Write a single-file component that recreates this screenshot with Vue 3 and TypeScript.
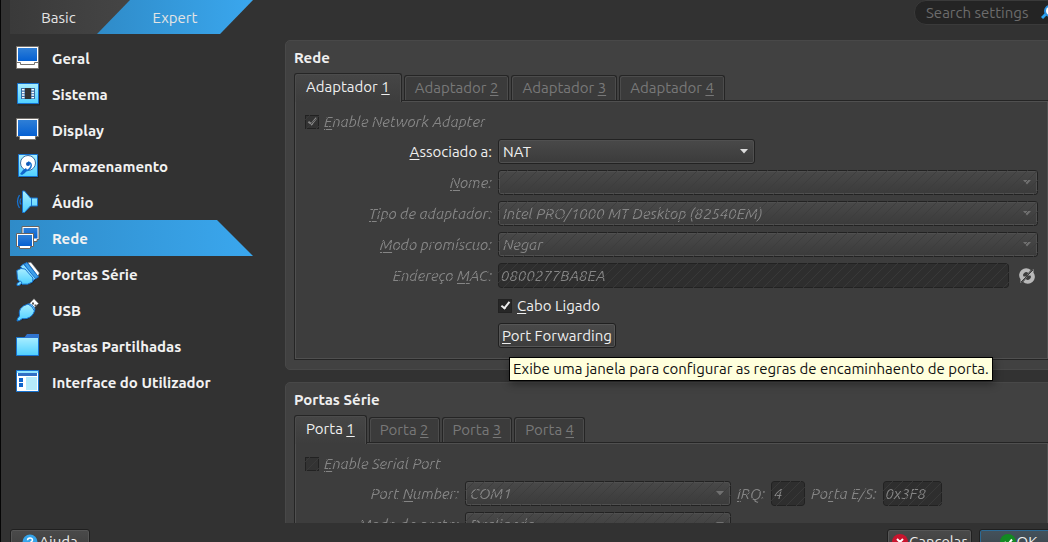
<script setup lang="ts">
import { ref } from 'vue'

type Mnemonic = [string, string, string]

interface Category {
  icon: string
  label: string
}

const categories: Category[] = [
  { icon: 'general', label: 'Geral' },
  { icon: 'system', label: 'Sistema' },
  { icon: 'display', label: 'Display' },
  { icon: 'storage', label: 'Armazenamento' },
  { icon: 'audio', label: 'Áudio' },
  { icon: 'network', label: 'Rede' },
  { icon: 'serial', label: 'Portas Série' },
  { icon: 'usb', label: 'USB' },
  { icon: 'folder', label: 'Pastas Partilhadas' },
  { icon: 'interface', label: 'Interface do Utilizador' },
]

const selected = ref('network')
const adapter = ref(1)
const port = ref(1)
const cableConnected = ref(true)

interface LockedCombo {
  id: string
  label: Mnemonic
  value: string
}

const lockedCombos: LockedCombo[] = [
  { id: 'name', label: ['', 'N', 'ome:'], value: '' },
  { id: 'type', label: ['', 'T', 'ipo de adaptador:'], value: 'Intel PRO/1000 MT Desktop (82540EM)' },
  { id: 'promisc', label: ['', 'M', 'odo promíscuo:'], value: 'Negar' },
]
</script>

<template>
  <div class="viewport">
    <div class="window">
      <header class="top">
        <div class="modes">
          <button type="button" class="mode basic">Basic</button>
          <button type="button" class="mode expert">Expert</button>
        </div>
        <div class="search">
          <input type="text" placeholder="Search settings" aria-label="Search settings" />
          <svg width="16" height="16" viewBox="0 0 16 16" aria-hidden="true">
            <path d="M1 13l5-5" stroke="#2aa5f5" stroke-width="3" />
            <circle cx="9" cy="6" r="5" fill="#fff" stroke="#2a8fe0" stroke-width="2" />
          </svg>
        </div>
      </header>

      <main class="body">
        <nav class="sidebar">
          <a
            v-for="c in categories"
            :key="c.icon"
            :href="'#' + c.icon"
            :class="['item', { on: selected === c.icon }]"
            @click="selected = c.icon"
          >
            <svg width="24" height="24" viewBox="0 0 24 24" aria-hidden="true">
              <defs>
                <linearGradient :id="'b-' + c.icon" x1="0" y1="0" x2="0" y2="1">
                  <stop offset="0" stop-color="#2f7fd6" />
                  <stop offset="1" stop-color="#0560d2" />
                </linearGradient>
                <linearGradient :id="'c-' + c.icon" x1="0" y1="0" x2="0" y2="1">
                  <stop offset="0" stop-color="#a9eeff" />
                  <stop offset="1" stop-color="#4fd0ff" />
                </linearGradient>
              </defs>
              <g v-if="c.icon === 'general'">
                <path d="M.5.5h22v22H.5z" fill="#fff" stroke="#77736e" />
                <path d="M2 2h19v13H2z" :fill="`url(#b-${c.icon})`" />
                <path d="M1 16.500h3.500v2h14v-2h3.500" fill="none" stroke="#77736e" />
              </g>
              <g v-else-if="c.icon === 'system'">
                <path d="M2 23h21.500V2" fill="none" stroke="#222" />
                <path d="M1.500 1.500h21v20h-21z" :fill="`url(#c-${c.icon})`" stroke="#1672d0" />
                <path d="M5 6h14v11H5z" fill="#3a6ea5" />
                <path d="M9 6h6v11H9z" fill="#333" />
                <path d="M6 7h2.500v1.500H6zM6 9.700h2.500v1.500H6zM6 12.300h2.500v1.500H6zM6 15h2.500v1.200H6zM15.500 7H18v1.500h-2.500zM15.500 9.700H18v1.500h-2.500zM15.500 12.300H18v1.500h-2.500zM15.500 15H18v1.200h-2.500z" fill="#fff" />
              </g>
              <g v-else-if="c.icon === 'display'">
                <path d="M.5.5h22v18h-3v3h-16v-3h-3z" fill="#fff" stroke="#77736e" />
                <path d="M2 2h19v16H2z" :fill="`url(#b-${c.icon})`" />
                <path d="M4.500 19.500h14v1h-14z" fill="#fff" />
              </g>
              <g v-else-if="c.icon === 'storage'">
                <path d="M3 23.500h19.500V2" fill="none" stroke="#222" />
                <path d="M2.500.5h19v22h-19z" :fill="`url(#c-${c.icon})`" stroke="#1672d0" />
                <circle cx="12" cy="9" r="7.500" fill="#fff" stroke="#3a6ea5" />
                <path d="M8 17c7 0 10-8 4-9" fill="none" stroke="#1672d0" stroke-width="1.500" />
                <circle cx="12" cy="10" r="2" fill="#0b57b8" />
                <path d="M4 20l3-4 3-2 1 2-2 3-3 2z" fill="#1166cc" />
              </g>
              <g v-else-if="c.icon === 'audio'">
                <path d="M3.500 5Q-.5 11.500 3.500 18M5 8.500q-2 3 0 6" fill="none" stroke="#1672d0" stroke-width="1.300" />
                <path d="M6.500 1h2l6 7h7v8h-7l-6 6.500h-2z" :fill="`url(#c-${c.icon})`" stroke="#1672d0" />
                <path d="M15.500 8v8" stroke="#1672d0" />
              </g>
              <g v-else-if="c.icon === 'network'">
                <path d="M6 .5h17v13h-2v2H8v-2H6z" fill="#fff" stroke="#6a645f" />
                <path d="M7.500 2H21.500v10.500H7.500z" :fill="`url(#b-${c.icon})`" />
                <path d="M.5 7.500h17v13h-3v2h-11v-2h-3z" fill="#fff" stroke="#6a645f" />
                <path d="M2 9h14v11H2z" :fill="`url(#b-${c.icon})`" />
              </g>
              <g v-else-if="c.icon === 'serial'">
                <path d="M5 22.500h5M15 22.500l6-7" fill="none" stroke="#222" />
                <path d="M12 .8l3-.3L23.300 11l-1.500 3z" fill="#fff" stroke="#8a8f94" stroke-width=".5" />
                <path d="M8 2l3-1.500L22.500 15l-3.500 2z" fill="#3f9fe8" stroke="#1672d0" />
                <path d="M4.500 4.500L7.500 2l12 14.500-3.500 3z" fill="#8fe0ff" stroke="#1672d0" />
                <path d="M.8 8.500L5 6.500 9 7l8 9-.5 4-5 2.200H6L4.500 20.500 1.500 17z" :fill="`url(#c-${c.icon})`" stroke="#1672d0" />
                <path d="M4.500 19L1 21.500v2h2l3-2.500z" fill="#7adfff" stroke="#1672d0" />
              </g>
              <g v-else-if="c.icon === 'usb'">
                <path d="M4 22l8-1 7-9" fill="none" stroke="#222" />
                <path d="M13.500 5.500L18 .8l4.500 4.700-5 5z" fill="#fff" stroke="#777" stroke-width=".6" />
                <path d="M16 4.500h2v2h-2zM18.500 6.500h2v2h-2z" fill="#555" />
                <path d="M12 6q2-1 5 2t1.500 5q-2 6-8 7.500-3 .5-4 0l-3 2-2.500.5.500-2.500 2-2.500Q1.500 9 12 6z" :fill="`url(#c-${c.icon})`" stroke="#1672d0" />
                <path d="M12 6q4.500 2 6.500 7" fill="none" stroke="#1672d0" />
              </g>
              <g v-else-if="c.icon === 'folder'">
                <path d="M.5 3.500h22v18H.5z" :fill="`url(#c-${c.icon})`" stroke="#1672d0" />
                <path d="M8 4l3-4h12v4z" fill="#2f74cf" />
              </g>
              <g v-else>
                <path d="M.5.5h22v21H.5z" fill="#fff" stroke="#1672d0" />
                <path d="M1 1h21v2H1z" fill="#8fe4ff" />
                <path d="M2 3h19v3H2z" fill="#2f6fc5" />
                <path d="M3 8h4v4H3zM3 13h4v4H3z" fill="#1166cc" />
                <path d="M10 7h11v13H10z" fill="#b5ebfb" />
              </g>
            </svg>
            <span>{{ c.label }}</span>
          </a>
        </nav>

        <div class="pages">
          <section class="group">
            <h2>Rede</h2>
            <div class="tabs">
              <button
                v-for="n in 4"
                :key="n"
                type="button"
                :class="['tab', { on: adapter === n }]"
                @click="adapter = n"
              >Adaptador <u>{{ n }}</u></button>
            </div>
            <div class="pane net">
              <label class="check wide hatch">
                <input type="checkbox" checked disabled />
                <span><u>E</u>nable Network Adapter</span>
              </label>

              <label class="name" for="attached"><u>A</u>ssociado a:</label>
              <div class="combo attached">
                <select id="attached"><option>NAT</option></select>
                <svg width="8" height="5" viewBox="0 0 8 5" aria-hidden="true"><path d="M0 0h8L4 4.500z" /></svg>
              </div>

              <template v-for="f in lockedCombos" :key="f.id">
                <label class="name hatch" :for="f.id">{{ f.label[0] }}<u>{{ f.label[1] }}</u>{{ f.label[2] }}</label>
                <div class="combo hatch">
                  <select :id="f.id" disabled><option>{{ f.value }}</option></select>
                  <svg width="8" height="5" viewBox="0 0 8 5" aria-hidden="true"><path d="M0 0h8L4 4.500z" /></svg>
                </div>
              </template>

              <label class="name hatch" for="mac">Endereço <u>M</u>AC:</label>
              <div class="mac">
                <input id="mac" class="edit hatch" type="text" value="0800277BA8EA" disabled />
                <button type="button" class="refresh" aria-label="Gerar endereço MAC" disabled>
                  <svg width="16" height="16" viewBox="0 0 16 16" aria-hidden="true">
                    <path d="M3 10A5 5 0 0 1 10.500 3.500M13 6A5 5 0 0 1 5.500 12.500" fill="none" stroke="#b8b8b8" stroke-width="4" />
                    <path d="M7.500 7.500L14.500 1v6.500zM8.500 8.500L1.500 15V8.500z" fill="#b8b8b8" />
                    <path d="M2 14L14 2" stroke="#3d3d3d" />
                  </svg>
                </button>
              </div>

              <label class="check field">
                <input v-model="cableConnected" type="checkbox" />
                <span><u>C</u>abo Ligado</span>
              </label>

              <div class="field forward">
                <button type="button" class="push" aria-describedby="forward-tip"><span><u>P</u>ort Forwarding</span></button>
                <div id="forward-tip" class="tip" role="tooltip">Exibe uma janela para configurar as regras de encaminhaento de porta.</div>
              </div>
            </div>
          </section>

          <section class="group">
            <h2>Portas Série</h2>
            <div class="tabs">
              <button
                v-for="n in 4"
                :key="n"
                type="button"
                :class="['tab', { on: port === n }]"
                @click="port = n"
              >Porta <u>{{ n }}</u></button>
            </div>
            <div class="pane ports">
              <label class="check wide hatch">
                <input type="checkbox" disabled />
                <span><u>E</u>nable Serial Port</span>
              </label>

              <label class="name hatch" for="com">Port <u>N</u>umber:</label>
              <div class="inline">
                <div class="combo serial hatch">
                  <select id="com" disabled><option>COM1</option></select>
                  <svg width="8" height="5" viewBox="0 0 8 5" aria-hidden="true"><path d="M0 0h8L4 4.500z" /></svg>
                </div>
                <label class="name hatch" for="irq"><u>I</u>RQ:</label>
                <input id="irq" class="edit irq hatch" type="text" value="4" disabled />
                <label class="name hatch" for="io">Po<u>r</u>ta E/S:</label>
                <input id="io" class="edit io hatch" type="text" value="0x3F8" disabled />
              </div>

              <label class="name hatch" for="portmode"><u>M</u>odo da porta:</label>
              <div class="inline">
                <div class="combo serial hatch">
                  <select id="portmode" disabled><option>Desligado</option></select>
                  <svg width="8" height="5" viewBox="0 0 8 5" aria-hidden="true"><path d="M0 0h8L4 4.500z" /></svg>
                </div>
              </div>
            </div>
          </section>
        </div>
      </main>

      <footer class="bottom">
        <button type="button" class="push dialog help">
          <svg width="16" height="16" viewBox="0 0 16 16" aria-hidden="true">
            <circle cx="8" cy="8" r="7.500" fill="#35a4ea" />
            <path d="M5.500 6.200Q5.700 4 8 4t2.500 2Q10.500 7.200 8 8.800V10M8 11.500V13" fill="none" stroke="#fff" stroke-width="1.500" />
          </svg>
          <span>Ajuda</span>
        </button>
        <button type="button" class="push dialog cancel">
          <svg width="16" height="16" viewBox="0 0 16 16" aria-hidden="true">
            <circle cx="8" cy="8" r="8" fill="#c8142d" />
            <path d="M5 5l6 6M11 5l-6 6" stroke="#fff" stroke-width="2" />
          </svg>
          <span>Cancelar</span>
        </button>
        <button type="button" class="push dialog ok">
          <svg width="16" height="16" viewBox="0 0 16 16" aria-hidden="true">
            <circle cx="8" cy="8" r="8" fill="#128a22" />
            <path d="M4.500 8l3 3L12 5.500" fill="none" stroke="#fff" stroke-width="2" />
          </svg>
          <span>OK</span>
        </button>
      </footer>
    </div>
  </div>
</template>

<style>
body {
  margin: 0;
  background: #323232;
}
</style>

<style scoped>
* {
  box-sizing: border-box;
}

.viewport {
  height: 100vh;
  overflow: hidden;
  background: #323232;
  color: #efefef;
  font: 15px/20px Ubuntu, "Noto Sans", sans-serif;
}

/* The dialog runs past the right and bottom edges of the screen. */
.window {
  display: flex;
  flex-direction: column;
  width: calc(100% + 20px);
  height: calc(100vh + 23px);
  padding: 0 10px 10px 9px;
  border-left: 1px solid #050505;
}

button,
input,
select {
  margin: 0;
  font: inherit;
  color: inherit;
}

u {
  text-underline-offset: 2px;
  text-decoration-thickness: 1px;
}

.top {
  display: flex;
  justify-content: space-between;
  align-items: flex-start;
  height: 40px;
  flex: none;
}

.modes {
  display: flex;
  width: 243px;
  height: 34px;
  background: linear-gradient(90deg, #3a3a3a, #454545 50%);
  clip-path: polygon(0 0, 100% 0, calc(100% - 33px) 100%, 0 100%);
}

.mode {
  padding: 2px 0 0;
  border: 0;
  background: none;
  color: #e4e4e4;
}

.basic {
  width: 97px;
  margin-right: -10px;
}

.expert {
  flex: 1;
  background: linear-gradient(90deg, #2f8bc8, #3aa7ee);
  clip-path: polygon(33px 0, 100% 0, 100% 100%, 0 100%);
}

.search {
  display: flex;
  align-items: center;
  width: 144px;
  height: 25px;
  padding-left: 11px;
  border: 1px solid #3a3a3a;
  border-radius: 12px;
  background: #242424;
}

.search input {
  width: 115px;
  padding: 0;
  border: 0;
  outline: 0;
  background: none;
  flex: none;
}

.search input::placeholder {
  color: #6c6c6c;
  opacity: 1;
}

.body {
  display: flex;
  gap: 32px;
  flex: 1;
  min-height: 0;
}

.sidebar {
  width: 243px;
  flex: none;
}

.item {
  display: flex;
  align-items: center;
  gap: 12px;
  height: 36px;
  padding-left: 6px;
  color: #f2f2f2;
  font-weight: bold;
  text-decoration: none;
}

.item span {
  padding-top: 2px;
}

.item.on {
  background: linear-gradient(90deg, #2f8bc8, #3aa7ee);
  clip-path: polygon(0 0, calc(100% - 36px) 0, 100% 100%, 0 100%);
}

.pages {
  display: flex;
  flex-direction: column;
  gap: 12px;
  flex: 1;
  min-width: 0;
  overflow: hidden;
}

.group {
  flex: none;
  padding: 7px 8px 9px;
  border: 1px solid #484848;
  border-radius: 5px;
  background: #414141;
}

h2 {
  margin: 0 0 5px;
  font-size: 15px;
  line-height: 20px;
}

.tabs {
  display: flex;
  align-items: flex-end;
  gap: 2px;
  height: 27px;
}

.tab {
  height: 25px;
  padding: 0 10px;
  border: 1px solid #252525;
  border-bottom: 0;
  border-radius: 3px 3px 0 0;
  background: #3b3b3b;
  box-shadow: inset 1px 1px #4c4c4c, inset -1px 0 #4c4c4c;
  color: #787878;
}

.tab.on {
  z-index: 1;
  height: 29px;
  margin-bottom: -2px;
  padding: 0 11px 2px;
  background: linear-gradient(#464646, #3d3d3d);
  color: #efefef;
}

.pane {
  display: grid;
  gap: 6px;
  align-items: center;
  padding: 9px 10px 11px;
  border: 1px solid #252525;
  background: #3d3d3d;
  box-shadow: inset 1px 1px #505050, inset -1px -1px #505050;
}

.net {
  grid-template-columns: 187px 1fr;
}

.ports {
  grid-template-columns: 154px 1fr;
}

.wide {
  grid-column: 1 / -1;
}

.field {
  grid-column: 2;
}

.name {
  justify-self: end;
}

.hatch {
  color: #858585;
  font-style: italic;
  mask-image: linear-gradient(135deg, #000 46%, rgba(0, 0, 0, 0.2) 46% 54%, #000 54%);
  mask-size: 10px 10px;
}

.check {
  display: flex;
  align-items: center;
  justify-self: start;
  gap: 5px;
  height: 23px;
}

.check input {
  appearance: none;
  width: 14px;
  height: 14px;
  border: 1px solid #222;
  background: #272727;
}

.check input:disabled {
  background: #333;
}

.check input:checked::after {
  content: "";
  display: block;
  width: 3px;
  height: 7px;
  margin: 0 0 0 4px;
  border: solid #f0f0f0;
  border-width: 0 2px 2px 0;
  transform: rotate(38deg);
}

.check input:disabled::after {
  border-color: #858585;
}

.combo {
  display: grid;
  align-items: center;
  min-width: 0;
}

.combo select,
.combo svg {
  grid-area: 1 / 1;
}

.combo select {
  appearance: none;
  width: 100%;
  height: 25px;
  padding: 0 20px 0 4px;
  border: 1px solid #222;
  border-radius: 3px;
  outline: 0;
  background: linear-gradient(#494949, #3b3b3b);
  box-shadow: inset 0 0 0 1px #505050;
  opacity: 1;
}

.combo svg {
  justify-self: end;
  margin-right: 7px;
  fill: #dcdcdc;
  pointer-events: none;
}

.combo.hatch svg {
  fill: #707070;
}

.attached {
  width: 257px;
}

.serial {
  width: 266px;
}

.edit {
  min-width: 0;
  height: 25px;
  padding: 0 2px;
  border: 1px solid #222;
  border-radius: 3px;
  background: #2e2e2e;
}

.mac {
  display: flex;
  align-items: center;
  gap: 10px;
}

.mac .edit {
  flex: 1;
}

.refresh {
  display: flex;
  padding: 0;
  margin-right: 3px;
  border: 0;
  background: none;
}

.inline {
  display: flex;
  align-items: center;
  gap: 6px;
}

.irq {
  width: 34px;
}

.io {
  width: 59px;
}

.forward {
  position: relative;
  justify-self: start;
}

.push {
  display: flex;
  align-items: center;
  justify-content: center;
  gap: 1px;
  height: 25px;
  padding: 0 3px;
  border: 1px solid #202020;
  border-radius: 3px;
  background: linear-gradient(#4a4a4a, #3c3c3c);
  box-shadow: inset 0 0 0 1px #565656;
}

.tip {
  position: absolute;
  z-index: 2;
  top: 34px;
  left: 11px;
  padding: 1px 3px;
  border: 1px solid #000;
  background: #ffffdc;
  box-shadow: 1px 3px 8px rgba(0, 0, 0, 0.4);
  color: #111;
  white-space: nowrap;
}

.bottom {
  display: flex;
  gap: 7px;
  flex: none;
  padding-top: 6px;
}

.dialog {
  height: 26px;
}

.help {
  width: 80px;
  margin-right: auto;
}

.cancel {
  width: 85px;
}

.ok {
  width: 79px;
  background: linear-gradient(#44525c, #3a4248);
  box-shadow: inset 0 0 0 1px #2d6a94;
}
</style>
